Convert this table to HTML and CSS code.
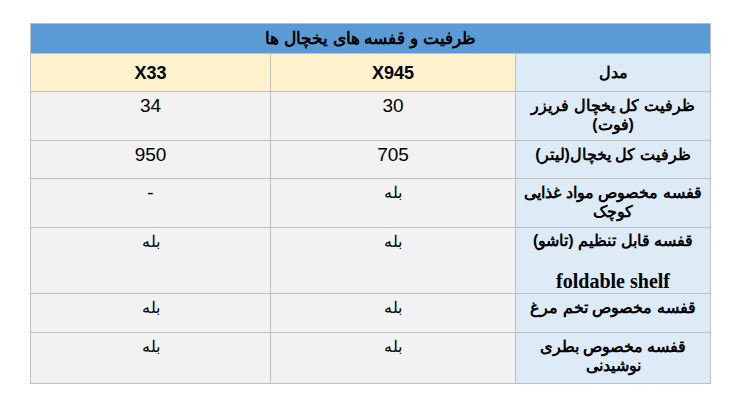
FILE: index.html
```html
<!DOCTYPE html>
<html lang="fa">
<head>
<meta charset="utf-8">
<link rel="stylesheet" href="styles.css">
</head>
<body>
<table class="spec" dir="rtl">
  <colgroup>
    <col class="c-label">
    <col class="c-mid">
    <col class="c-left">
  </colgroup>
  <tr class="r-title"><th colspan="3" class="title">ظرفیت و قفسه های یخچال ها</th></tr>
  <tr class="r-head">
    <td class="label head-label">مدل</td>
    <th class="model">X945</th>
    <th class="model">X33</th>
  </tr>
  <tr class="r1">
    <td class="label">ظرفیت کل یخچال فریزر<br>(فوت)</td>
    <td class="val">30</td>
    <td class="val">34</td>
  </tr>
  <tr class="r2">
    <td class="label">ظرفیت کل یخچال(لیتر)</td>
    <td class="val">705</td>
    <td class="val">950</td>
  </tr>
  <tr class="r3">
    <td class="label">قفسه مخصوص مواد غذایی<br>کوچک</td>
    <td class="val yes">بله</td>
    <td class="val">-</td>
  </tr>
  <tr class="r4">
    <td class="label">قفسه قابل تنظیم (تاشو)<br><br><span class="en">foldable shelf</span></td>
    <td class="val yes">بله</td>
    <td class="val yes">بله</td>
  </tr>
  <tr class="r5">
    <td class="label">قفسه مخصوص تخم مرغ</td>
    <td class="val yes">بله</td>
    <td class="val yes">بله</td>
  </tr>
  <tr class="r6">
    <td class="label">قفسه مخصوص بطری<br>نوشیدنی</td>
    <td class="val yes">بله</td>
    <td class="val yes">بله</td>
  </tr>
</table>
</body>
</html>
```

FILE: styles.css
```css
html, body {
  margin: 0;
  background: #ffffff;
}
body {
  padding: 23px 0 0 30px;
  font-family: "Liberation Sans", Arial, sans-serif;
  color: #000;
}
.spec {
  border-collapse: collapse;
  table-layout: fixed;
  width: 680px;
}
.c-label { width: 195px; }
.c-mid { width: 245px; }
.c-left { width: 240px; }
.spec th, .spec td {
  border: 1px solid #bfbfbf;
  padding: 0;
  text-align: center;
  vertical-align: top;
}
.spec .title {
  background: #5b9bd5;
  font-size: 17px;
  font-weight: bold;
  line-height: 20px;
  vertical-align: middle;
}
.spec .model {
  background: #fff2cc;
  font-size: 18px;
  font-weight: bold;
  line-height: 20px;
  vertical-align: middle;
}
.spec .label {
  background: #ddebf7;
  font-size: 16px;
  font-weight: bold;
  line-height: 19px;
  padding-top: 4px;
}
.spec .head-label {
  vertical-align: middle;
  padding-top: 0;
}
.spec .val {
  background: #f2f2f2;
  font-size: 19px;
  line-height: 22px;
  padding-top: 3px;
}
.spec .yes {
  font-size: 16px;
}
.en {
  font-family: "Liberation Serif", "Times New Roman", serif;
  font-size: 20px;
}
.r-title { height: 30px; }
.r-head { height: 38px; }
.r1 { height: 49px; }
.r2 { height: 38px; }
.r3 { height: 49px; }
.r4 { height: 66px; }
.r5 { height: 39px; }
.r6 { height: 51px; }
.spec .r4 .label { line-height: 20px; padding-top: 3px; }
```
